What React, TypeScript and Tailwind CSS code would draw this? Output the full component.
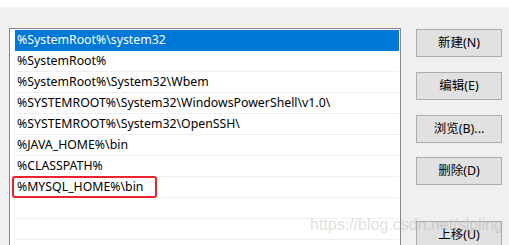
import React from "react";

const paths = [
  "%SystemRoot%\\system32",
  "%SystemRoot%",
  "%SystemRoot%\\System32\\Wbem",
  "%SYSTEMROOT%\\System32\\WindowsPowerShell\\v1.0\\",
  "%SYSTEMROOT%\\System32\\OpenSSH\\",
  "%JAVA_HOME%\\bin",
  "%CLASSPATH%",
  "%MYSQL_HOME%\\bin",
  "",
  "",
];

const buttons = [
  { label: "新建(N)", mt: "mt-[1px]" },
  { label: "编辑(E)", mt: "mt-[15px]" },
  { label: "浏览(B)...", mt: "mt-[15px]" },
  { label: "删除(D)", mt: "mt-[14px]" },
  { label: "上移(U)", mt: "mt-[36px]" },
];

const font = { fontFamily: '"Noto Sans", "Noto Sans CJK SC", sans-serif' };

export default function App() {
  return (
    <div className="relative h-[245px] w-[509px] overflow-hidden bg-[#f0f0f0] text-[12.3px] text-black" style={font}>
      <div className="h-[7px] bg-white" />
      <div className="flex pl-[9px] pt-[21px]">
        <div className="relative h-[300px] w-[392px] border border-[#828790] bg-white pl-[5px] pr-[1px] pt-[1px]">
          {paths.map((p, i) => (
            <div
              key={i}
              className={
                i === 0
                  ? "flex h-[21px] items-center bg-[#0078d7] pb-[1px] pl-[2px] text-white"
                  : "flex h-[21px] items-center border-b border-[#efefef] pl-[2px]"
              }
            >
              {p}
            </div>
          ))}
          <div className="absolute left-[2px] top-[147px] h-[22px] w-[145px] rounded-[3px] border-2 border-[#e8232b]" />
        </div>
        <div className="ml-[15px] flex flex-col text-[12.5px]">
          {buttons.map((b) => (
            <div
              key={b.label}
              className={`${b.mt} flex h-[28px] w-[86px] items-center justify-center border border-[#adadad] bg-[#e1e1e1]`}
            >
              {b.label}
            </div>
          ))}
        </div>
      </div>
      <div
        className="pointer-events-none absolute left-[310px] top-[216px] text-[16px] leading-[18px] text-[#a0a0a0]/35"
        style={{ fontFamily: '"Liberation Sans", Arial, sans-serif' }}
      >
        https://blog.csdn.net/slpling
      </div>
    </div>
  );
}
